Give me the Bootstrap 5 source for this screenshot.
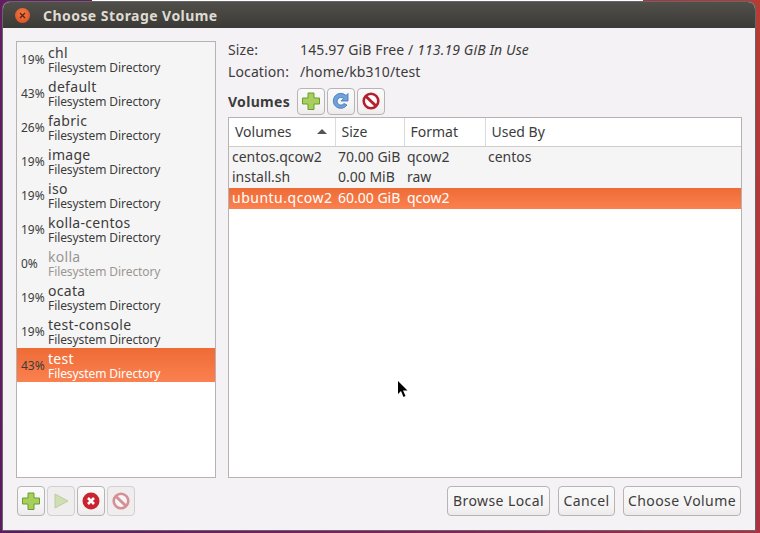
<!DOCTYPE html>
<html>
<head>
    <title>Choose Storage Volume</title>
    <link href="https://cdn.jsdelivr.net/npm/bootstrap@5.3.0/dist/css/bootstrap.min.css" rel="stylesheet">
    <style>
        html, body { height: 100%; }
        body {
            width: 760px; height: 533px; overflow: hidden; position: relative;
            padding: 2px 5px 3px 3px;
            font-family: "Noto Sans", sans-serif; font-size: 14px; color: #3c3c3c;
            background: linear-gradient(78deg, #5c1a63 0%, #6f1e62 30%, #8a2456 60%, #a62c48 80%, #b83b33 100%);
        }
        .other-win { position: absolute; left: 92px; top: 0; width: 551px; height: 2px; background: #fff; }
        .app-window { height: 100%; position: relative; display: flex; flex-direction: column; background: #f5f2f5; border-radius: 7px 7px 0 0; overflow: hidden; box-shadow: 0 0 0 1px #666; }
        .title-bar { height: 26px; flex: none; padding-left: 12px; background: linear-gradient(#504f4a, #3b3a36); color: #dfdbd2; font-weight: 700; font-size: 14px; letter-spacing: .45px; }
        .close-dot { width: 15px; height: 15px; border-radius: 50%; background: radial-gradient(circle at 50% 35%, #f27a45, #d9491c); margin-right: 13px; flex: none; }
        .dlg-body { flex: 1; min-height: 0; padding: 13px 13px 14px 13px; }
        .main-row { flex: 1; min-height: 0; gap: 12px; }
        .pool-pane { width: 200px; flex: none; background: #fff; border: 1px solid #b8b2b2; border-radius: 0; }
        .pool-item { height: 34px; background: #f6f5f5; border: 0; border-radius: 0 !important; padding: 0; color: #3c3c3c; display: flex; align-items: center; }
        .pool-pct { width: 31px; flex: none; font-size: 12px; padding-left: 4px; margin-top: 1px; }
        .pool-text { padding-top: 2px; }
        .pool-name { font-size: 14px; line-height: 15px; margin-top: -1px; letter-spacing: .3px; }
        .pool-type { font-size: 12px; line-height: 13px; margin-top: 1px; letter-spacing: -.08px; }
        .pool-item.is-off .pool-name, .pool-item.is-off .pool-type { color: #9a9692; }
        .pool-item.is-on { background: linear-gradient(#ee6b35, #fb8150); color: #fff; }
        .pool-item.is-on .pool-pct { color: #3c3c3c; }
        .vol-pane { flex: 1; min-width: 0; }
        .info-row { height: 22px; line-height: 18px; letter-spacing: .12px; }
        .info-label { width: 72px; flex: none; }
        .vol-tools { height: 30px; margin: 1px 0 1px; gap: 2px; }
        .vol-heading { font-weight: 700; margin-right: 5px; letter-spacing: .3px; }
        .tool-btn { width: 28px; height: 27px; padding: 0; display: inline-flex; align-items: center; justify-content: center; border: 1px solid #b8b4b4; border-radius: 4px; background: linear-gradient(#fafafa, #f5f3f4 70%, #ecebeb); }
        .tool-btn.is-dim { background: #efeded; border-color: #d2cfcf; }
        .tool-btn.is-dim svg { opacity: .45; }
        .vol-box { flex: 1; min-height: 0; background: #fff; border: 1px solid #b8b2b2; }
        .vol-table { margin: 0; table-layout: fixed; width: 512px; --bs-table-bg: transparent; color: inherit; }
        .vol-table th { height: 28px; font-weight: 400; padding: 0 0 0 6px; border-bottom: 1px solid #cfcccc; border-right: 1px solid #dcdada; vertical-align: middle; position: relative; }
        .vol-table th:last-child { border-right: 0; }
        .vol-table td { padding: 0 0 0 3px; height: 21px; line-height: 20px; border: 0; background: #f6f5f5; white-space: nowrap; overflow: hidden; }
        .vol-table tr.is-on td { background: linear-gradient(#ee6b35, #fb8150); color: #fff; }
        .vol-table tr.is-on td:first-child { letter-spacing: .5px; }
        .sort-mark { position: absolute; right: 8px; top: 11px; width: 0; height: 0; border: 5px solid transparent; border-top: 0; border-bottom: 5px solid #555; }
        .foot-row { height: 30px; margin-top: 8px; }
        .foot-tools { gap: 2px; margin-left: 1px; }
        .foot-tools .tool-btn { height: 30px; }
        .push-btn { height: 30px; padding: 0 0 2px; font-size: 14px; letter-spacing: .42px; color: #3c3c3c; white-space: nowrap; border: 1px solid #b8b4b4; border-radius: 4px; background: linear-gradient(#fafafa, #f5f3f4 70%, #ecebeb); }
        .btn-browse { width: 103px; }
        .btn-cancel { width: 57px; }
        .btn-choose { width: 118px; }
        .push-row { gap: 8px; margin-right: 1px; }
        .mouse-ptr { position: absolute; left: 397px; top: 381px; }
    </style>
</head>
<body>
    <div class="other-win"></div>
    <div class="app-window">
        <div class="title-bar d-flex align-items-center">
            <span class="close-dot d-flex align-items-center justify-content-center">
                <svg width="7" height="7" viewBox="0 0 7 7"><path d="M1 1l5 5M6 1l-5 5" stroke="#5a2010" stroke-width="1.2"/></svg>
            </span>
            Choose Storage Volume
        </div>
        <div class="dlg-body d-flex flex-column">
            <div class="main-row d-flex">
                <div class="pool-pane list-group" id="pools"></div>
                <div class="vol-pane d-flex flex-column">
                    <div class="info-row d-flex"><span class="info-label">Size:</span><span>145.97 GiB Free / <i>113.19 GiB In Use</i></span></div>
                    <div class="info-row d-flex"><span class="info-label">Location:</span><span>/home/kb310/test</span></div>
                    <div class="vol-tools d-flex align-items-center">
                        <span class="vol-heading">Volumes</span>
                        <button class="tool-btn"><svg width="20" height="20"><use href="#ic-add"/></svg></button>
                        <button class="tool-btn"><svg width="20" height="20"><use href="#ic-refresh"/></svg></button>
                        <button class="tool-btn"><svg width="20" height="20"><use href="#ic-stop"/></svg></button>
                    </div>
                    <div class="vol-box">
                        <table class="table vol-table">
                            <colgroup><col style="width:106px"><col style="width:69px"><col style="width:81px"><col></colgroup>
                            <thead><tr><th>Volumes<span class="sort-mark"></span></th><th>Size</th><th>Format</th><th>Used By</th></tr></thead>
                            <tbody>
                                <tr><td>centos.qcow2</td><td>70.00 GiB</td><td>qcow2</td><td>centos</td></tr>
                                <tr><td>install.sh</td><td>0.00 MiB</td><td>raw</td><td></td></tr>
                                <tr class="is-on"><td>ubuntu.qcow2</td><td>60.00 GiB</td><td>qcow2</td><td></td></tr>
                            </tbody>
                        </table>
                    </div>
                </div>
            </div>
            <div class="foot-row d-flex justify-content-between">
                <div class="foot-tools d-flex">
                    <button class="tool-btn"><svg width="20" height="20"><use href="#ic-add"/></svg></button>
                    <button class="tool-btn is-dim"><svg width="20" height="20" viewBox="0 0 20 20"><path d="M4 3l13 7-13 7z" fill="#a9cf6e" stroke="#7fa648"/></svg></button>
                    <button class="tool-btn"><svg width="20" height="20" viewBox="0 0 20 20"><circle cx="10" cy="10" r="8.5" fill="#c9242f"/><path d="M7 7l6 6M13 7l-6 6" stroke="#fff" stroke-width="2.6"/></svg></button>
                    <button class="tool-btn is-dim"><svg width="20" height="20"><use href="#ic-stop"/></svg></button>
                </div>
                <div class="push-row d-flex">
                    <button class="btn push-btn btn-browse">Browse Local</button>
                    <button class="btn push-btn btn-cancel">Cancel</button>
                    <button class="btn push-btn btn-choose">Choose Volume</button>
                </div>
            </div>
        </div>
    </div>

    <svg class="mouse-ptr" width="12" height="18" viewBox="0 0 12 18"><path d="M1 0v13l3-3 2.500 6 2-1-2.500-5.500h4.500z" fill="#000"/></svg>

    <svg width="0" height="0" class="position-absolute">
        <symbol id="ic-add" viewBox="0 0 20 20"><path d="M7 2h6v5h5.500v6H13v5.500H7V13H1.500V7H7z" fill="#a8cf5c" stroke="#6a9a30"/></symbol>
        <symbol id="ic-refresh" viewBox="0 0 20 20"><path d="M16 14a7.500 7.500 0 1 1-1-9.500l2-2v7.500h-7l2.500-2.500a3.800 3.800 0 1 0 .5 5z" fill="#6fa2d8" stroke="#3f74b5" stroke-width=".8"/></symbol>
        <symbol id="ic-stop" viewBox="0 0 20 20"><circle cx="10" cy="10" r="7.300" fill="#fff" stroke="#b5202c" stroke-width="2.600"/><path d="M5 5.500l9.500 9" stroke="#b5202c" stroke-width="3"/></symbol>
    </svg>

    <script src="https://cdn.jsdelivr.net/npm/bootstrap@5.3.0/dist/js/bootstrap.bundle.min.js"></script>
    <script>
        const pools = [
            ["19%", "chl"], ["43%", "default"], ["26%", "fabric"], ["19%", "image"], ["19%", "iso"],
            ["19%", "kolla-centos"], ["0%", "kolla"], ["19%", "ocata"], ["19%", "test-console"], ["43%", "test"]
        ];
        const poolList = document.getElementById("pools");
        pools.forEach((pool) => {
            const row = document.createElement("div");
            row.className = "list-group-item pool-item";
            if (pool[1] === "kolla") row.classList.add("is-off");
            if (pool[1] === "test") row.classList.add("is-on");
            row.innerHTML = `
                <span class="pool-pct">${pool[0]}</span>
                <div class="pool-text"><div class="pool-name">${pool[1]}</div><div class="pool-type">Filesystem Directory</div></div>
            `;
            poolList.appendChild(row);
        });
    </script>
</body>
</html>
